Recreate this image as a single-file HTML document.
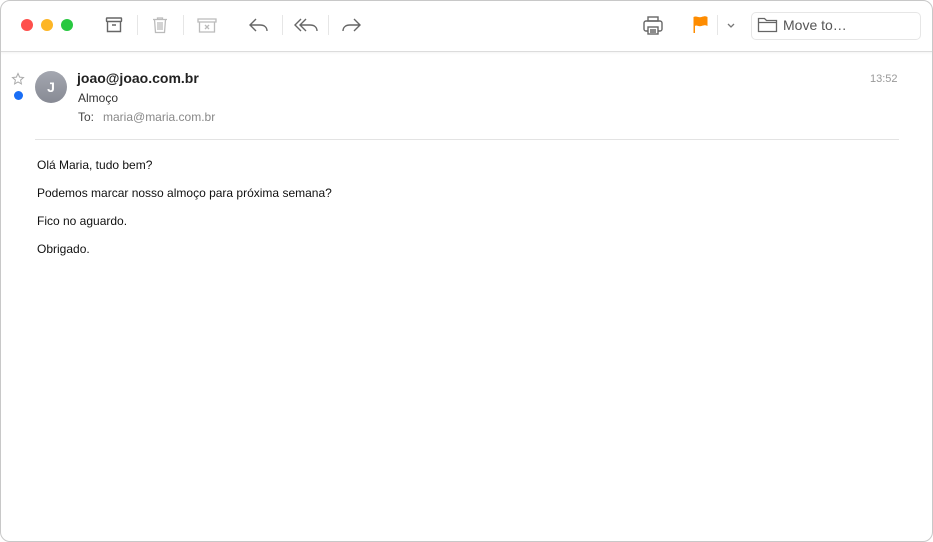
<!DOCTYPE html>
<html><head><style>
body{margin:0;width:933px;height:542px;background:#fff;font-family:"Liberation Sans",sans-serif;overflow:hidden;position:relative}
.win{position:absolute;left:0;top:0;width:933px;height:542px;overflow:hidden}
.bd{position:absolute;left:0;top:0;width:931px;height:540px;border:1px solid #c8c8c8;border-radius:10px;z-index:5}
.tb{position:absolute;left:0;top:0;width:100%;height:51px;border-bottom:1px solid #dcdcdc;background:#fff;box-shadow:0 1px 2px rgba(0,0,0,.05)}
.dot{position:absolute;top:19px;width:12px;height:12px;border-radius:50%}
.sep{position:absolute;top:15px;width:1px;height:20px;background:#e6e6e6}
svg{position:absolute}
.t{position:absolute;white-space:nowrap}
</style></head><body><div class="bd"></div><div class="win">
<div class="tb">
<div class="dot" style="left:21px;background:#fe4f4c"></div>
<div class="dot" style="left:41px;background:#fdb626"></div>
<div class="dot" style="left:61px;background:#28c840"></div>
<svg style="left:104px;top:15px" width="20" height="20" viewBox="0 0 20 20" fill="none" stroke="#666" stroke-width="1.4"><rect x="2.5" y="3" width="15" height="3.5" rx=".5"/><path d="M3.5 6.5v10h13v-10M8 10h4"/></svg>
<div class="sep" style="left:137px"></div>
<svg style="left:150px;top:15px" width="20" height="20" viewBox="0 0 20 20" fill="none" stroke="#bbb" stroke-width="1.3"><path d="M3 4.5h14M7.5 4.5V3h5v1.5M4.5 4.5l1 13h9l1-13M8 7v8M10 7v8M12 7v8"/></svg>
<div class="sep" style="left:183px"></div>
<svg style="left:196px;top:15px" width="22" height="20" viewBox="0 0 22 20" fill="none" stroke="#bbb" stroke-width="1.3"><path d="M2 4h18v3H2zM3.5 7v10h15V7M9 10l4 4M13 10l-4 4"/></svg>
<svg style="left:248px;top:15px" width="22" height="20" viewBox="0 0 22 20" fill="none" stroke="#666" stroke-width="1.4"><path d="M8 4L2 10l6 6M2 10h10c4 0 7 2 7 6"/></svg>
<div class="sep" style="left:282px"></div>
<svg style="left:294px;top:15px" width="26" height="20" viewBox="0 0 26 20" fill="none" stroke="#666" stroke-width="1.4"><path d="M7 4L1 10l6 6M12 4l-6 6 6 6M6 10h10c4 0 7 2 7 6"/></svg>
<div class="sep" style="left:328px"></div>
<svg style="left:340px;top:15px" width="22" height="20" viewBox="0 0 22 20" fill="none" stroke="#666" stroke-width="1.4"><path d="M14 4l6 6-6 6M20 10H10c-4 0-7 2-7 6"/></svg>
<svg style="left:642px;top:15px" width="22" height="22" viewBox="0 0 22 22" fill="none" stroke="#666" stroke-width="1.4"><rect x="6" y="2" width="10" height="4"/><rect x="2" y="6" width="18" height="10" rx="2"/><rect x="6" y="12" width="10" height="7" fill="#fff"/><path d="M8 15h6M8 17h6"/></svg>
<svg style="left:692px;top:15px" width="18" height="20" viewBox="0 0 18 20"><path d="M1.5 2c3-1.5 5 1 8 0s4-1 6 0v9c-2-1-3-1-6 0s-5-1.5-6.5 0v7h-1.5z" fill="#fe8c00"/></svg>
<div class="sep" style="left:717px"></div>
<svg style="left:726px;top:22px" width="10" height="8" viewBox="0 0 10 8" fill="none" stroke="#777" stroke-width="1.3"><path d="M2 2l3 3 3-3"/></svg>
<div style="position:absolute;left:751px;top:12px;width:168px;height:26px;border:1px solid #e6e6e6;border-radius:5px"></div>
<svg style="left:757px;top:16px" width="22" height="18" viewBox="0 0 22 18" fill="none" stroke="#666" stroke-width="1.3"><path d="M1.5 2.5h6l2 2h10v11h-18zM1.5 6.5h18"/></svg>
<div class="t" style="left:783px;top:17px;font-size:14px;color:#555">Move to…</div>
</div>
<svg style="left:11px;top:72px" width="14" height="14" viewBox="0 0 14 14"><path d="M7 1.5l1.6 3.6 3.9.4-2.9 2.6.8 3.8L7 10l-3.4 1.9.8-3.8L1.5 5.5l3.9-.4z" fill="none" stroke="#aaa" stroke-width="1"/></svg>
<div class="dot" style="left:14px;top:91px;width:9px;height:9px;background:#1a6ef5"></div>
<div style="position:absolute;left:35px;top:71px;width:32px;height:32px;border-radius:50%;background:linear-gradient(#a4a7b0,#878a94);color:#fff;font-weight:bold;font-size:14px;text-align:center;line-height:32px">J</div>
<div class="t" style="left:77px;top:70px;font-size:14px;font-weight:bold;color:#222">joao@joao.com.br</div>
<div class="t" style="left:78px;top:91px;font-size:12px;color:#333">Almoço</div>
<div class="t" style="left:78px;top:110px;font-size:12px;color:#444">To:</div>
<div class="t" style="left:103px;top:110px;font-size:12px;color:#888">maria@maria.com.br</div>
<div class="t" style="left:870px;top:73px;font-size:11px;color:#999">13:52</div>
<div style="position:absolute;left:35px;top:139px;width:864px;height:1px;background:#e3e3e3"></div>
<div class="t" style="left:37px;top:158px;font-size:12px;color:#111">Olá Maria, tudo bem?</div>
<div class="t" style="left:37px;top:186px;font-size:12px;color:#111">Podemos marcar nosso almoço para próxima semana?</div>
<div class="t" style="left:37px;top:214px;font-size:12px;color:#111">Fico no aguardo.</div>
<div class="t" style="left:37px;top:242px;font-size:12px;color:#111">Obrigado.</div>
</div></body></html>
